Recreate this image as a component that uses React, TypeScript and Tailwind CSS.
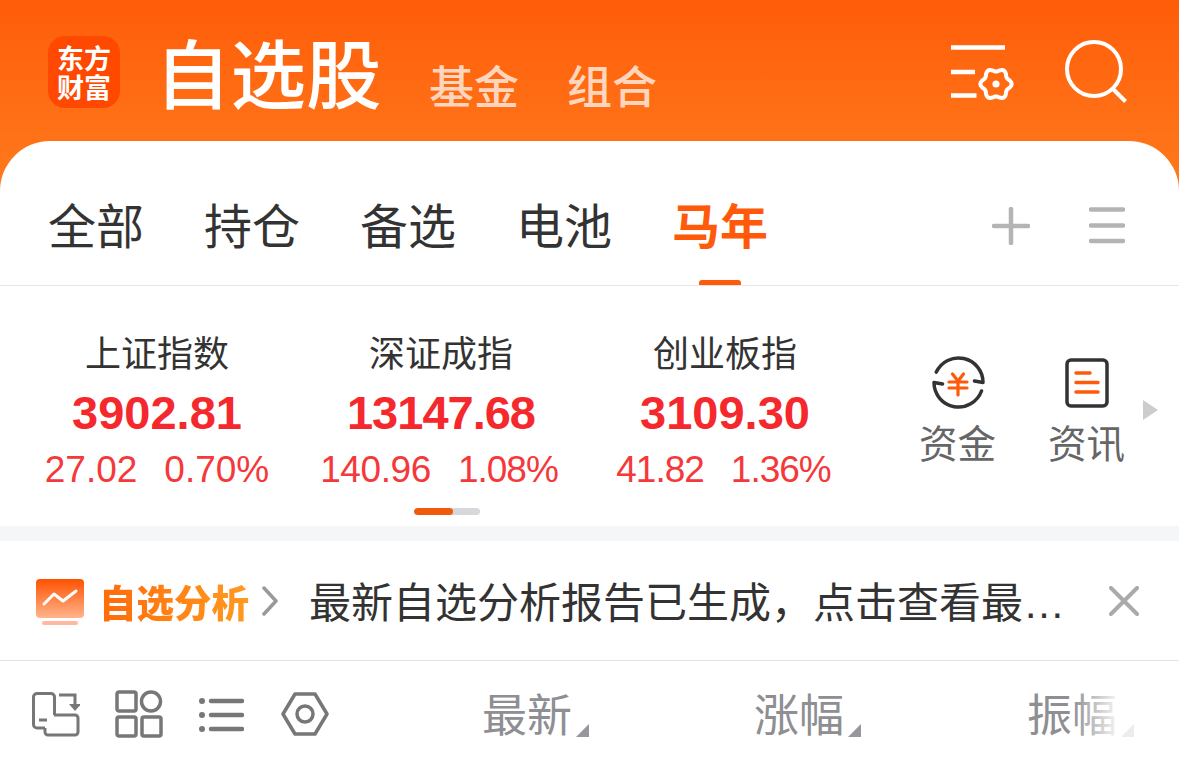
import React from 'react';

const CJK = "font-['Noto_Sans_CJK_SC','Noto_Sans',sans-serif]";

const tabs = ['全部', '持仓', '备选', '电池', '马年'];

const indices = [
  { name: '上证指数', value: '3902.81', valueClass: '', change: '27.02', changeClass: '', percent: '0.70%', percentClass: '', rowClass: '' },
  { name: '深证成指', value: '13147.68', valueClass: 'tracking-[-1px]', change: '140.96', changeClass: 'tracking-[-0.4px]', percent: '1.08%', percentClass: 'tracking-[-1px]', rowClass: 'mr-[4px]' },
  { name: '创业板指', value: '3109.30', valueClass: '', change: '41.82', changeClass: 'tracking-[-1px]', percent: '1.36%', percentClass: 'tracking-[-1px]', rowClass: 'mr-[3px]' },
];

// six lobed gear outline for the settings icon
const gearPath = (() => {
  const pts: string[] = [];
  for (let i = 0; i < 72; i++) {
    const t = (i / 72) * Math.PI * 2;
    const r = 14 + 1.6 * Math.cos(6 * t);
    pts.push(`${(45 + r * Math.cos(t)).toFixed(2)} ${(40 + r * Math.sin(t)).toFixed(2)}`);
  }
  return `M${pts.join('L')}Z`;
})();

const SortMark = ({ faded }: { faded?: boolean }) => (
  <svg width="13" height="13" viewBox="0 0 13 13" className="mt-[43px] ml-[4px] shrink-0">
    <path d="M13 0V13H0Z" fill={faded ? '#ececee' : '#96969e'} />
  </svg>
);

const App: React.FC = () => {
  return (
    <div className={`${CJK} w-[1179px] h-[761px] overflow-hidden bg-white relative`}>
      {/* Orange header */}
      <div className="bg-gradient-to-b from-[#ff5c08] to-[#ff7a1c] h-[191px]">
        <div className="h-[141px] flex items-start pl-[48px]">
          <div className="mt-[36px] w-[72px] h-[72px] rounded-[17px] bg-[#ff4800] flex flex-col items-center justify-center text-white font-bold text-[27px] leading-[29px]">
            <span>东方</span>
            <span>财富</span>
          </div>
          <h1 className="ml-[35px] mt-[15px] w-[228px] text-white text-[75.5px] leading-[110px] font-medium whitespace-nowrap">自选股</h1>
          <span className="ml-[46px] mt-[52px] text-[#ffd6bd] text-[45px] leading-[66px] font-medium whitespace-nowrap">基金</span>
          <span className="ml-[48px] mt-[52px] text-[#ffd6bd] text-[45px] leading-[66px] font-medium whitespace-nowrap">组合</span>
          <svg width="64" height="58" viewBox="0 0 64 58" fill="none" className="ml-[294px] mt-[44px] shrink-0">
            <path d="M0 3.5H54M0 28H24M0 51.5H25.5" stroke="#fff" strokeWidth="4.5" />
            <path d={gearPath} stroke="#fff" strokeWidth="4" strokeLinejoin="round" />
            <circle cx="45" cy="40" r="3.6" fill="#fff" />
          </svg>
          <svg width="64" height="64" viewBox="0 0 64 64" fill="none" className="ml-[50px] mt-[40px] shrink-0">
            <circle cx="29" cy="29" r="27" stroke="#fff" strokeWidth="4" />
            <path d="M48 49L60.5 61.5" stroke="#fff" strokeWidth="4" />
          </svg>
        </div>
      </div>

      {/* White sheet over the header */}
      <div className="relative -mt-[50px] bg-white rounded-t-[50px]">
        {/* Tabs */}
        <div className="h-[145px] border-b border-[#e5e5e5] flex items-start pl-[48px] pr-[54px] relative">
          <div className="flex gap-[60px] mt-[47px]">
            {tabs.map((tab, i) => (
              <span
                key={tab}
                className={
                  i === 4
                    ? 'text-[48px] leading-[70px] text-[#ff5a0a] font-bold'
                    : 'text-[48px] leading-[70px] text-[#333333]'
                }
              >
                {tab}
              </span>
            ))}
          </div>
          <div className="absolute left-[699px] bottom-0 w-[42px] h-[5px] rounded-t-[3px] bg-[#ff5a0a]" />
          <svg width="38" height="38" viewBox="0 0 38 38" className="ml-auto mt-[66px]" fill="none">
            <path d="M19 2V36M2 19H36" stroke="#b4b4b4" strokeWidth="4.5" strokeLinecap="round" />
          </svg>
          <svg width="36" height="38" viewBox="0 0 36 38" className="ml-[59px] mt-[66px]" fill="none">
            <path d="M2 2.5H34M2 18.5H34M2 34H34" stroke="#b4b4b4" strokeWidth="4.5" strokeLinecap="round" />
          </svg>
        </div>

        {/* Market indices */}
        <div className="h-[240px] flex items-start pl-[15px] relative">
          {indices.map((item) => (
            <div key={item.name} className="w-[284px] flex flex-col items-center pt-[38px]">
              <span className="text-[36px] leading-[54px] text-[#333333]">{item.name}</span>
              <span className={`mt-[5px] font-['Liberation_Sans',sans-serif] font-bold text-[47px] leading-[60px] text-[#f5282d] ${item.valueClass}`}>
                {item.value}
              </span>
              <div className={`mt-[-3px] flex gap-[27px] font-['Liberation_Sans',sans-serif] text-[37px] leading-[60px] text-[#f5383a] whitespace-nowrap ${item.rowClass}`}>
                <span className={item.changeClass}>{item.change}</span>
                <span className={item.percentClass}>{item.percent}</span>
              </div>
            </div>
          ))}
          <div className="flex flex-col items-center w-[129px] ml-[26px] pt-[70px]">
            <svg width="54" height="54" viewBox="0 0 54 54" fill="none">
              <path d="M5.3 16.1A24.5 24.5 0 0 1 52 26.5L43.5 25" stroke="#333" strokeWidth="3.5" strokeLinecap="round" strokeLinejoin="round" />
              <path d="M11.5 28L3 26.5A24.5 24.5 0 0 0 50.5 35" stroke="#333" strokeWidth="3.5" strokeLinecap="round" strokeLinejoin="round" />
              <path d="M21.5 18L27 25L32.5 18M18 26H36M18 32H36M27 26V39" stroke="#ff5a0a" strokeWidth="3.2" strokeLinecap="round" strokeLinejoin="round" />
            </svg>
            <span className="mt-[3px] text-[38.5px] leading-[56px] text-[#666666]">资金</span>
          </div>
          <div className="flex flex-col items-center w-[129px] pt-[70px]">
            <svg width="44" height="50" viewBox="0 0 44 50" fill="none" className="mt-[2px]">
              <rect x="2" y="2" width="40" height="46" rx="4" stroke="#333" strokeWidth="3.5" />
              <path d="M11 15H25M11 24.5H33M11 34H33" stroke="#ff5a0a" strokeWidth="3.5" strokeLinecap="round" />
            </svg>
            <span className="mt-[5px] text-[38.5px] leading-[56px] text-[#666666]">资讯</span>
          </div>
          <svg width="15" height="20" viewBox="0 0 15 20" className="absolute left-[1143px] top-[114px]">
            <path d="M0 0L15 10L0 20Z" fill="#cccccc" />
          </svg>
          <div className="absolute left-[414px] top-[222px] w-[66px] h-[7px] rounded-full bg-[#d6d8dc] overflow-hidden">
            <div className="w-[39px] h-full rounded-full bg-[#f05a0a]" />
          </div>
        </div>

        <div className="h-[15px] bg-[#f5f6f8]" />

        {/* Analysis banner */}
        <div className="h-[120px] border-b border-[#e2e2e2] flex items-center pl-[36px]">
          <svg width="48" height="46" viewBox="0 0 48 46" fill="none" className="mt-[2px] shrink-0">
            <defs>
              <linearGradient id="screen" x1="0" y1="0" x2="0" y2="1">
                <stop offset="0" stopColor="#ff5200" />
                <stop offset="1" stopColor="#ffb48c" />
              </linearGradient>
            </defs>
            <rect width="48" height="39" rx="4" fill="url(#screen)" />
            <path d="M8 25L18 15L27 22L40 12" stroke="#fff" strokeWidth="3" strokeLinecap="round" strokeLinejoin="round" />
            <rect x="6" y="42" width="36" height="4" rx="2" fill="#ffb9a0" />
          </svg>
          <span className="ml-[15px] text-[37.5px] leading-[54px] font-black bg-gradient-to-r from-[#ff6a08] to-[#ff9a20] bg-clip-text text-transparent whitespace-nowrap">
            自选分析
          </span>
          <svg width="18" height="30" viewBox="0 0 18 30" fill="none" className="ml-[12px] shrink-0">
            <path d="M3 2L15 15L3 28" stroke="#999" strokeWidth="3.5" strokeLinecap="round" strokeLinejoin="round" />
          </svg>
          <span className="ml-[30px] mt-[2px] w-[766px] text-[42px] leading-[60px] text-[#333333] whitespace-nowrap">
            最新自选分析报告已生成，点击查看最<span className="font-['Liberation_Sans',sans-serif]">…</span>
          </span>
          <svg width="30" height="30" viewBox="0 0 30 30" fill="none" className="ml-[34px] shrink-0">
            <path d="M2 2L28 28M28 2L2 28" stroke="#aaaaaa" strokeWidth="4" strokeLinecap="round" />
          </svg>
        </div>

        {/* Table header */}
        <div className="h-[100px] flex items-start pl-[32px] relative">
          <svg width="48" height="46" viewBox="0 0 48 46" fill="none" className="mt-[31px] shrink-0">
            <path d="M13 36H5a3.5 3.5 0 0 1-3.5-3.5V5A3.5 3.5 0 0 1 5 1.5h14A3.5 3.5 0 0 1 22.5 5V23" stroke="#777" strokeWidth="3" />
            <path d="M7 28H15" stroke="#777" strokeWidth="3" />
            <path d="M13 36V40a3 3 0 0 0 3 3H43a3 3 0 0 0 3-3V26a3 3 0 0 0-3-3H22" stroke="#777" strokeWidth="3" />
            <path d="M27 3H43V12" stroke="#777" strokeWidth="3" />
            <path d="M37 12H49L43 19Z" fill="#777" />
          </svg>
          <svg width="48" height="48" viewBox="0 0 48 48" fill="none" className="ml-[35px] mt-[29px] shrink-0" stroke="#777" strokeWidth="3.5">
            <rect x="2" y="2" width="19" height="19" rx="2" />
            <circle cx="36" cy="11.5" r="9.5" />
            <rect x="2" y="27" width="19" height="19" rx="2" />
            <rect x="27" y="27" width="19" height="19" rx="2" />
          </svg>
          <svg width="45" height="38" viewBox="0 0 45 38" fill="none" className="ml-[36px] mt-[35px] shrink-0">
            <path d="M12 5H43M12 19H43M12 33H43" stroke="#777" strokeWidth="4.5" strokeLinecap="round" />
            <circle cx="3" cy="5" r="3" fill="#777" />
            <circle cx="3" cy="19" r="3" fill="#777" />
            <circle cx="3" cy="33" r="3" fill="#777" />
          </svg>
          <svg width="48" height="44" viewBox="0 0 48 44" fill="none" className="ml-[37px] mt-[31px] shrink-0">
            <path d="M14 2H34L46 22L34 42H14L2 22Z" stroke="#777" strokeWidth="3.5" strokeLinejoin="round" />
            <circle cx="24" cy="22" r="8" stroke="#777" strokeWidth="3.5" />
          </svg>
          <div className="ml-[153px] mt-[20px] flex items-start w-[272px]">
            <span className="text-[45px] leading-[64px] text-[#8e8e93]">最新</span>
            <SortMark />
          </div>
          <div className="mt-[20px] flex items-start w-[273px]">
            <span className="text-[45px] leading-[64px] text-[#8e8e93]">涨幅</span>
            <SortMark />
          </div>
          <div className="mt-[20px] flex items-start">
            <span className="text-[45px] leading-[64px] text-[#8e8e93]">振幅</span>
            <SortMark faded />
          </div>
          {/* fades out the last column */}
          <div className="absolute left-[1072px] top-0 w-[50px] h-full bg-gradient-to-r from-white/0 to-white" />
        </div>
      </div>
    </div>
  );
};

export default App;
